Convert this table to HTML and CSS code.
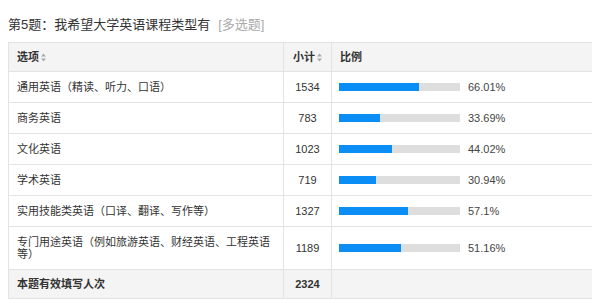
FILE: index.html
```html
<!DOCTYPE html>
<html lang="zh">
<head>
<meta charset="utf-8">
<link rel="stylesheet" href="styles.css">
</head>
<body>
<div class="title">第5题：我希望大学英语课程类型有<span class="qtype">[多选题]</span></div>
<table class="stats">
  <colgroup><col class="c1"><col class="c2"><col class="c3"></colgroup>
  <thead>
    <tr>
      <th>选项<svg class="sort" viewBox="0 0 5 9" width="5" height="9"><path d="M0 3.5 L2.5 0.5 L5 3.5 Z M0 5.5 L2.5 8.5 L5 5.5 Z"/></svg></th>
      <th class="num">小计<svg class="sort" viewBox="0 0 5 9" width="5" height="9"><path d="M0 3.5 L2.5 0.5 L5 3.5 Z M0 5.5 L2.5 8.5 L5 5.5 Z"/></svg></th>
      <th>比例</th>
    </tr>
  </thead>
  <tbody>
    <tr><td>通用英语（精读、听力、口语）</td><td class="num">1534</td><td><div class="ratio"><div class="bar"><div class="fill" style="width:66.01%"></div></div><span>66.01%</span></div></td></tr>
    <tr><td>商务英语</td><td class="num">783</td><td><div class="ratio"><div class="bar"><div class="fill" style="width:33.69%"></div></div><span>33.69%</span></div></td></tr>
    <tr><td>文化英语</td><td class="num">1023</td><td><div class="ratio"><div class="bar"><div class="fill" style="width:44.02%"></div></div><span>44.02%</span></div></td></tr>
    <tr><td>学术英语</td><td class="num">719</td><td><div class="ratio"><div class="bar"><div class="fill" style="width:30.94%"></div></div><span>30.94%</span></div></td></tr>
    <tr><td>实用技能类英语（口译、翻译、写作等）</td><td class="num">1327</td><td><div class="ratio"><div class="bar"><div class="fill" style="width:57.1%"></div></div><span>57.1%</span></div></td></tr>
    <tr><td>专门用途英语（例如旅游英语、财经英语、工程英语等）</td><td class="num">1189</td><td><div class="ratio"><div class="bar"><div class="fill" style="width:51.16%"></div></div><span>51.16%</span></div></td></tr>
  </tbody>
  <tfoot>
    <tr><td>本题有效填写人次</td><td class="num">2324</td><td></td></tr>
  </tfoot>
</table>
</body>
</html>
```
FILE: styles.css
```css
html { overflow: hidden; }
body {
  margin: 8px;
  font-family: "Liberation Sans", "Noto Sans CJK SC", sans-serif;
  color: #333;
  background: #fff;
}
.title {
  font-size: 13px;
  line-height: 20px;
  padding: 7px 0;
  color: #333;
}
.qtype {
  color: #aaa;
  margin-left: 8px;
}
.stats {
  width: 590px;
  border-collapse: collapse;
  table-layout: fixed;
  font-size: 11px;
  line-height: 12px;
}
.c1 { width: 275px; }
.c2 { width: 48px; }
.stats th, .stats td {
  border: 1px solid #e3e3e3;
  padding: 9px 8px;
  text-align: left;
  vertical-align: middle;
  color: #333;
}
.stats th {
  background: #f4f4f4;
  font-weight: bold;
  padding: 8px 8px;
}
.stats tfoot td {
  background: #f4f4f4;
  font-weight: bold;
  padding: 8px 8px;
}
.stats .num { text-align: center; padding-left: 4px; padding-right: 4px; }
.sort {
  fill: #aaa;
  margin-left: 2px;
  vertical-align: -1px;
}
.ratio {
  display: flex;
  align-items: center;
  gap: 8px;
  height: 12px;
}
.bar {
  width: 121px;
  height: 8px;
  background: #dedede;
  margin-left: -1px;
}
.fill {
  height: 100%;
  background: #0a8ef5;
}
.ratio span { color: #444; }
```
